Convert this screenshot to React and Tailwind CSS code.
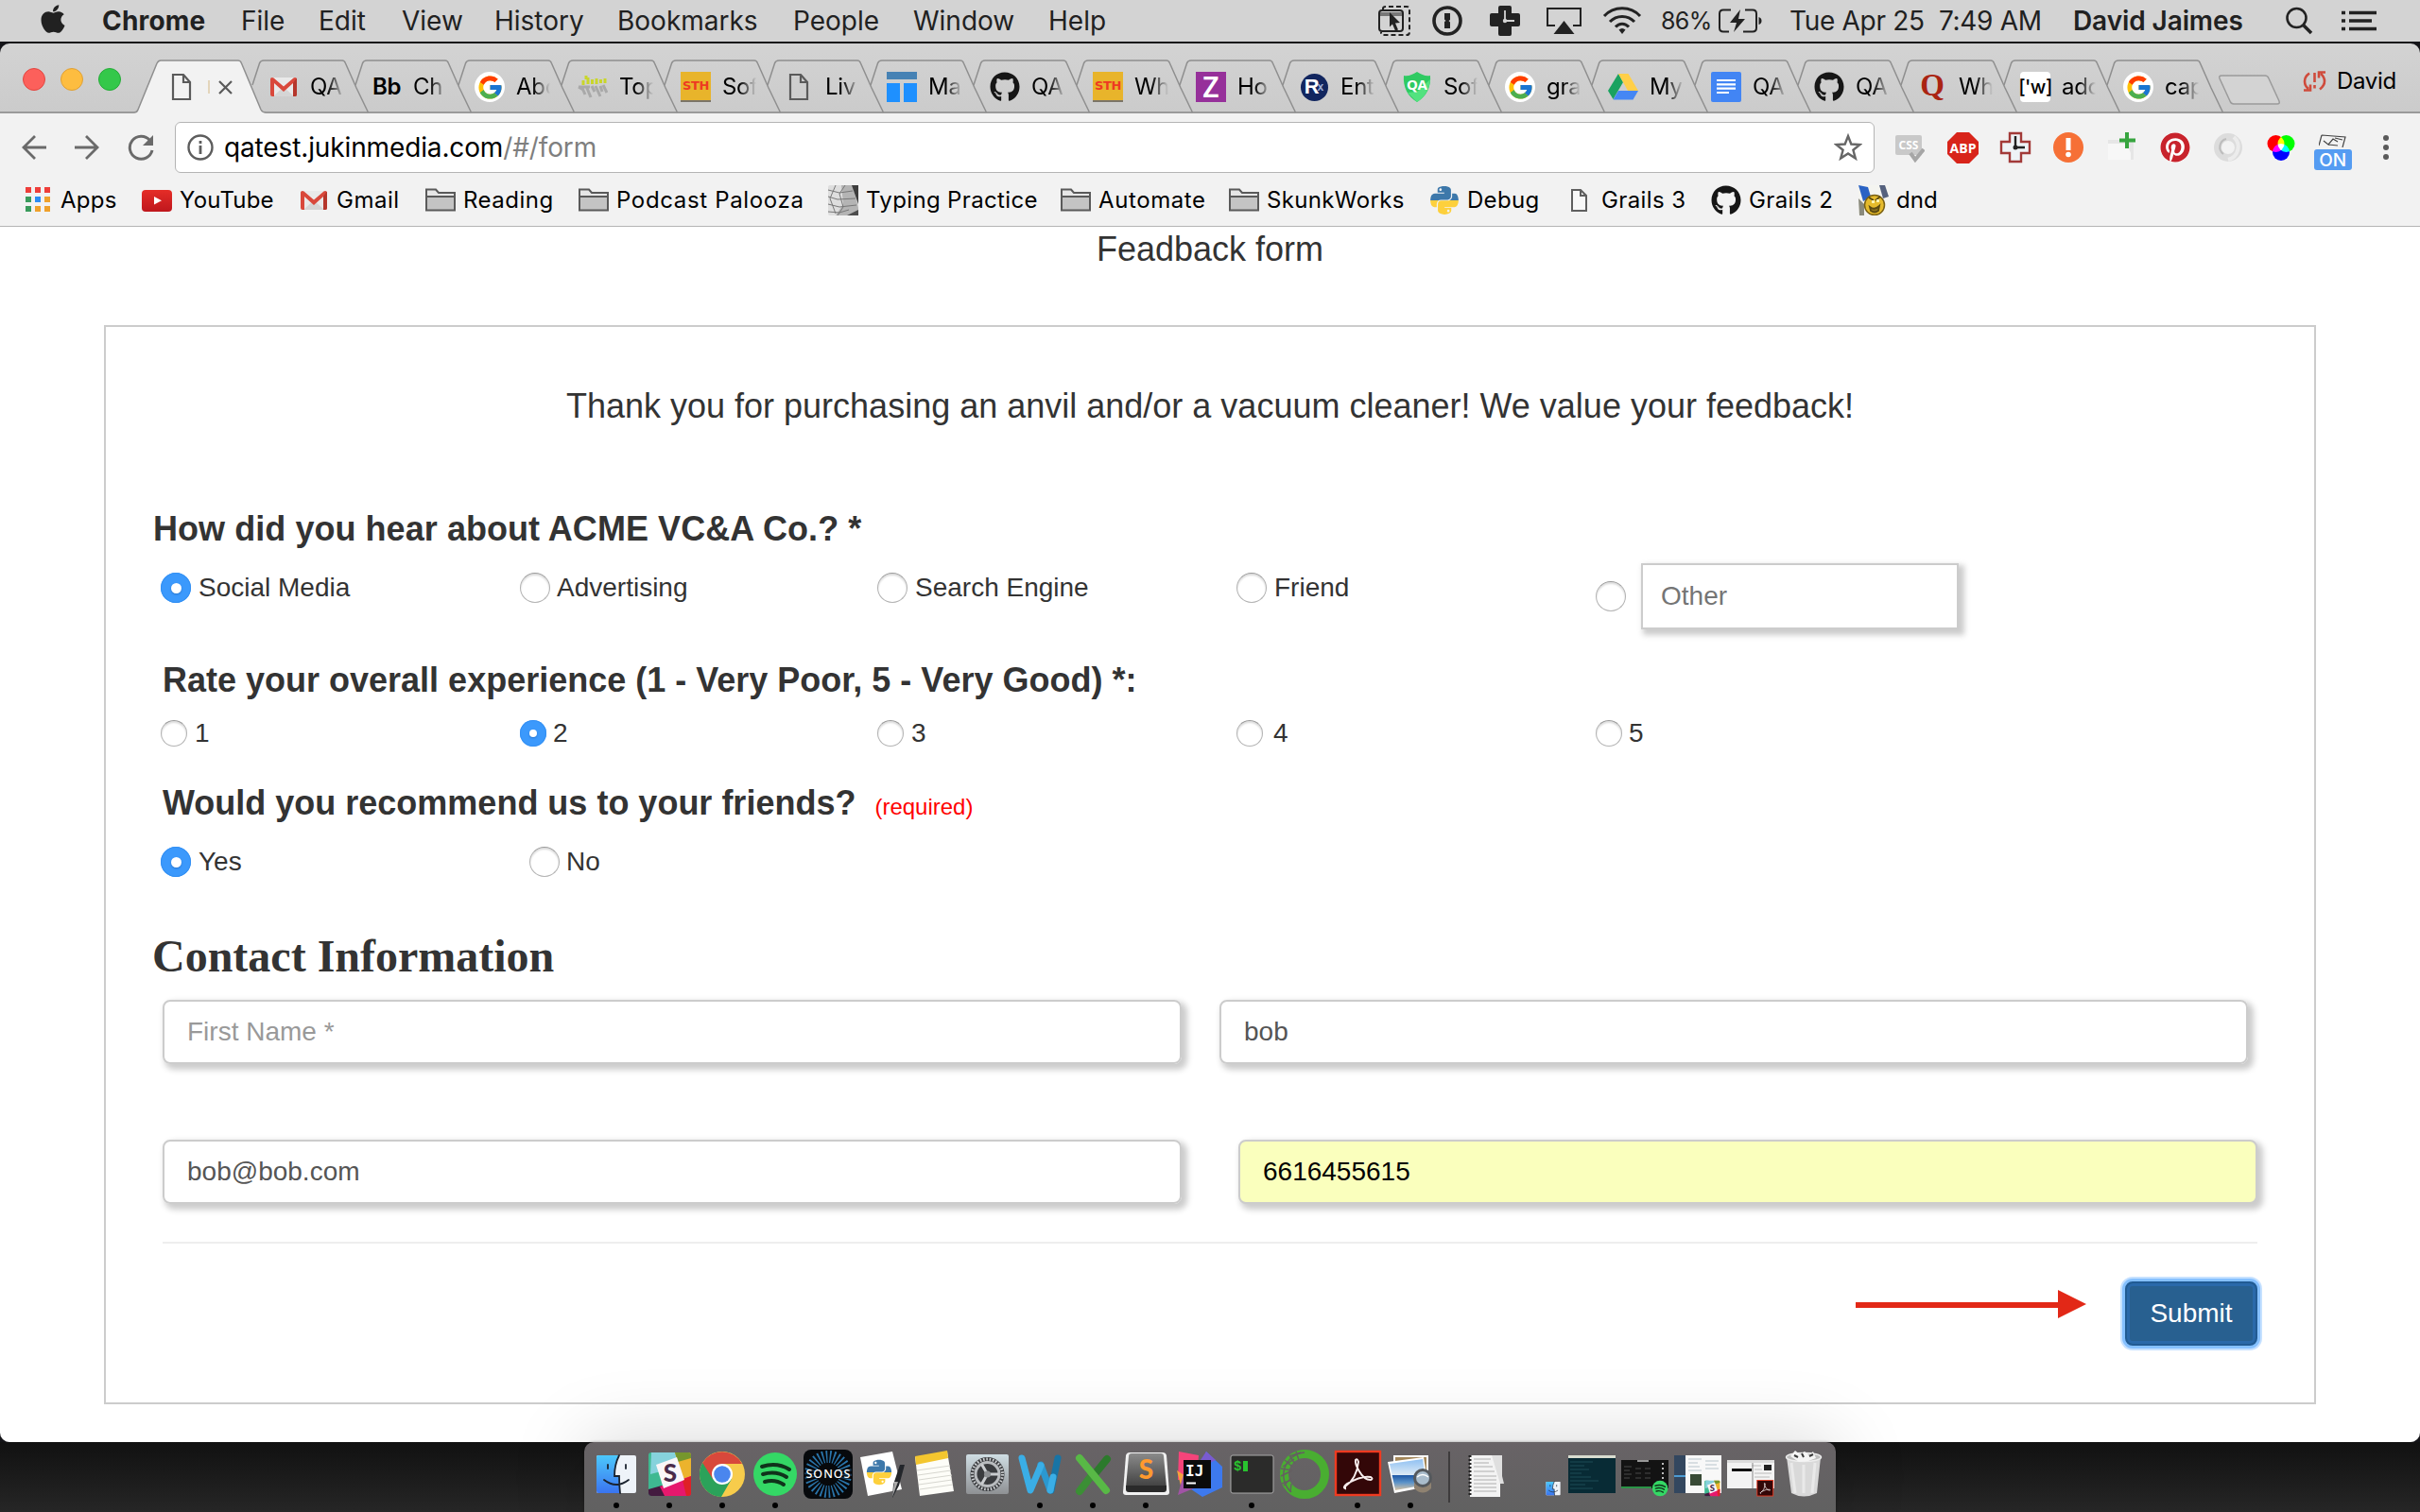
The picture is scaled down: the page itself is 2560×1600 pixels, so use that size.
import React from "react";
import { FaApple, FaGithub, FaPinterest, FaPython } from "react-icons/fa";
import { FcGoogle } from "react-icons/fc";

/* ---------- shared glyphs ---------- */

const Defs = () => (
  <svg width="0" height="0" className="absolute">
    <defs>
      <linearGradient id="py" x1="0" y1="0" x2="0" y2="1">
        <stop offset="0.5" stopColor="#3d78aa" />
        <stop offset="0.5" stopColor="#fdd03c" />
      </linearGradient>
      <linearGradient id="finder" x1="0" y1="0" x2="0" y2="1">
        <stop offset="0" stopColor="#4cc8fb" />
        <stop offset="1" stopColor="#3a74f0" />
      </linearGradient>
      <linearGradient id="key" x1="0" y1="0" x2="0" y2="1">
        <stop offset="0" stopColor="#8a8a8a" />
        <stop offset="1" stopColor="#3a3a3a" />
      </linearGradient>
      <linearGradient id="metal" x1="0" y1="0" x2="0" y2="1">
        <stop offset="0" stopColor="#cfdde3" />
        <stop offset="1" stopColor="#8f9194" />
      </linearGradient>
      <linearGradient id="tube" x1="0" y1="0" x2="0" y2="1">
        <stop offset="0" stopColor="#e52d27" />
        <stop offset="1" stopColor="#bf171d" />
      </linearGradient>
      <linearGradient id="sea" x1="0" y1="0" x2="0" y2="1">
        <stop offset="0" stopColor="#8fc0f2" />
        <stop offset="0.5" stopColor="#dbe9f5" />
        <stop offset="0.52" stopColor="#1d57a5" />
        <stop offset="0.75" stopColor="#5b93c9" />
        <stop offset="1" stopColor="#d8c4a4" />
      </linearGradient>
    </defs>
  </svg>
);

const GmailIcon = () => (
  <svg width="32" height="32" viewBox="0 0 32 32">
    <path d="M3 6h26v20H3z" fill="#e9e9e9" />
    <path d="M5 26l11-10 11 10z" fill="#d5d5d5" />
    <path d="M2 8v16a2 2 0 0 0 2 2h2V12l10 9 10-9v14h2a2 2 0 0 0 2-2V8c0-2-2-2.600-3.500-1.500L16 15.500 5.500 6.500C4 5.400 2 6 2 8z" fill="#d9483b" />
    <path d="M26 12v14h2a2 2 0 0 0 2-2V8c0-.6-.2-1-.5-1.300z" fill="#b5362b" />
  </svg>
);

const PageIcon = () => (
  <svg width="32" height="32" viewBox="0 0 32 32" fill="none" stroke="#5a5a5a" strokeWidth="2.200">
    <path d="M7 3h11l7 8v18H7z" />
    <path d="M18 3v8h7" />
  </svg>
);

const SmallPageIcon = () => (
  <svg width="32" height="32" viewBox="0 0 32 32" fill="none" stroke="#5f5f5f" strokeWidth="2">
    <path d="M9 5h9l6 6v16H9z" fill="#f8f8f8" />
    <path d="M18 5v6h6" />
  </svg>
);

const FolderIcon = () => (
  <svg width="32" height="32" viewBox="0 0 32 32" stroke="#5a5a5a" strokeWidth="2">
    <path d="M1 26V4.500h10l3 3.500h17v18z" fill="#e6e6e6" />
    <path d="M1 12h30v14.500H1z" fill="#c4c4c4" />
  </svg>
);

const GoogleIcon = () => (
  <span className="flex size-8 items-center justify-center rounded-full bg-white">
    <FcGoogle size={29} />
  </span>
);

const GithubIcon = () => <FaGithub size={32} color="#161616" />;

const PythonIcon = () => <FaPython size={34} fill="url(#py)" />;

const SthIcon = () => (
  <span className="flex size-8 items-center justify-center border-b-2 border-[#7b7468] bg-[#e8b42b] font-['DejaVu_Sans'] text-[13px] font-bold tracking-tight text-[#ee3a22]">
    STH
  </span>
);

const TopIcon = () => (
  <svg width="32" height="32" viewBox="0 0 32 32" strokeWidth="3">
    <path d="M6 9v5M11 6v7M15.500 8v5M20 7v6M24.500 8v4M29 7v5M9 4v4" stroke="#c9d62b" />
    <path d="M1 16l5 3M4 15l4 9M9 15l5 12M15 15l3 6M19 15l5 11M24 15l2 6M27 14l4 8M1 16h12" stroke="#a9a9a9" />
  </svg>
);

const TileIcon = () => (
  <svg width="32" height="32" viewBox="0 0 32 32">
    <path d="M0 0h32v8H0z" fill="#4682b4" />
    <path d="M0 12h14v20H0zM18 12h14v20H18z" fill="#1e90ff" />
  </svg>
);

const ZIcon = () => (
  <span className="flex size-8 items-center justify-center bg-[#96309a] font-['Noto_Sans'] text-[30px] leading-none font-semibold text-white">
    Z
  </span>
);

const RxIcon = () => (
  <span className="flex size-[29px] items-center justify-center rounded-full bg-[#12265f] font-['Liberation_Sans'] text-[22px] leading-none font-bold text-white">
    R<span className="-ml-[2px] text-[12px] text-[#9fb0d8]">x</span>
  </span>
);

const QaIcon = () => (
  <svg width="32" height="32" viewBox="0 0 32 32">
    <path d="M2 4c5 1 9-1 14-4 5 3 9 5 14 4 1 12-4 22-14 28C6 26 1 16 2 4z" fill="#2fca62" />
    <path d="M30 8C29 19 24 27 16 32L6 22l10-1z" fill="#52e27f" />
    <text x="16" y="19" textAnchor="middle" fontSize="15" fontWeight="700" fill="#fff" fontFamily="Noto Sans">QA</text>
  </svg>
);

const DriveIcon = () => (
  <svg width="32" height="32" viewBox="0 0 32 32">
    <path d="M11 2L0 20l5.500 9L16 11z" fill="#1aa260" />
    <path d="M11 2h10.500L32 20H21z" fill="#ffcf48" />
    <path d="M11 20h21l-5.500 9.500H5.500z" fill="#4587f4" />
  </svg>
);

const DocsIcon = () => (
  <svg width="32" height="32" viewBox="0 0 32 32">
    <rect width="32" height="32" rx="2" fill="#4285f4" />
    <path d="M6 9h20M6 13.300h20M6 17.600h20M6 22h13" stroke="#fff" strokeWidth="2.200" />
  </svg>
);

const QuoraIcon = () => (
  <span className="-mt-1 font-['Liberation_Serif'] text-[33px] leading-none font-bold text-[#aa2412]">Q</span>
);

const WIcon = () => (
  <span className="flex size-8 items-center justify-center rounded-[4px] bg-white font-['Inter'] text-[20px] leading-none font-medium tracking-tight text-black">
    ['w]
  </span>
);

const BbIcon = () => (
  <span className="font-['Inter'] text-[24px] leading-none font-semibold tracking-[-0.5px] text-black">Bb</span>
);

/* ---------- menu bar ---------- */

const menus = [
  ["File", "w-[82px]"],
  ["Edit", "w-[88px]"],
  ["View", "w-[98px]"],
  ["History", "w-[130px]"],
  ["Bookmarks", "w-[186px]"],
  ["People", "w-[127px]"],
  ["Window", "w-[143px]"],
  ["Help", "w-[348px]"],
];

function MenuBar() {
  return (
    <div className="flex h-11 shrink-0 items-center bg-[#d3d3d3] pl-[41px] font-['Inter'] text-[28px] leading-[44px] whitespace-pre text-[#212121]">
      <div className="w-[67px] shrink-0 pb-1">
        <FaApple size={34} className="-ml-[2px]" />
      </div>
      <div className="w-[147px] shrink-0 font-bold tracking-[0.2px]">Chrome</div>
      {menus.map(([m, w]) => (
        <div key={m} className={w + " shrink-0"}>{m}</div>
      ))}
      <div className="ml-px w-[57px] shrink-0">
        <svg width="34" height="32" viewBox="0 0 34 32" fill="none" stroke="#222" strokeWidth="2">
          <rect x="1" y="5" width="25" height="22" rx="3" />
          <path d="M2 9h23" strokeWidth="4" stroke="#777" />
          <path d="M5 4V3q0-2 3-2h22q3 0 3 3v24q0 3-3 3H5q-2 0-2-3" strokeDasharray="5 3" />
          <path d="M12 7l11 11-5 .5 3 7-3 1-3-7-3 3z" fill="#222" stroke="none" />
        </svg>
      </div>
      <div className="w-[61px] shrink-0">
        <svg width="32" height="32" viewBox="0 0 32 32">
          <circle cx="16" cy="16" r="14" fill="none" stroke="#222" strokeWidth="3.600" />
          <path d="M13 8h6v7l-1.500 1 1.500 1.500V24h-6v-7l1.500-1L13 14.500z" fill="#222" />
        </svg>
      </div>
      <div className="w-[60px] shrink-0">
        <svg width="32" height="32" viewBox="0 0 32 32">
          <path d="M11 0h10q2 0 2 2v6h7q2 0 2 2v10q0 2-2 2h-7v8q0 2-2 2H11q-2 0-2-2v-8H2q-2 0-2-2V10q0-2 2-2h7V2q0-2 2-2z" fill="#222" />
          <path d="M16 5v11h10" fill="none" stroke="#d3d3d3" strokeWidth="1.800" />
          <circle cx="16" cy="16" r="2.200" fill="#d3d3d3" />
        </svg>
      </div>
      <div className="w-[59px] shrink-0">
        <svg width="38" height="30" viewBox="0 0 38 30">
          <path d="M9 20H1V2h35v18h-8" fill="none" stroke="#222" strokeWidth="2" />
          <path d="M18.500 15l11 14h-22z" fill="#222" />
        </svg>
      </div>
      <div className="w-[62px] shrink-0">
        <svg width="42" height="30" viewBox="0 0 42 30" fill="none" stroke="#222" strokeWidth="3">
          <path d="M2 10C12-1 30-1 40 10M8 16c7-7.500 19-7.500 26 0M14 21.500c4-4.500 10-4.500 14 0" />
          <path d="M21 29l-3.500-4.500q3.500-3 7 0z" fill="#222" stroke="none" />
        </svg>
      </div>
      <div className="w-[61px] shrink-0 text-[25px] tracking-[-0.6px]">86%</div>
      <div className="w-[76px] shrink-0">
        <svg width="46" height="26" viewBox="0 0 46 26">
          <path d="M13 1.500H5q-4 0-4 4v15q0 4 4 4h6M28 1.500h8q4 0 4 4v15q0 4-4 4h-10" fill="none" stroke="#222" strokeWidth="2" />
          <path d="M42.500 9q3 1 3 4t-3 4z" fill="#222" />
          <path d="M23 1L12 15h7l-3 10 12-14h-7z" fill="#222" />
        </svg>
      </div>
      <div className="-ml-px w-[300px] shrink-0 tracking-[-0.3px]">Tue Apr 25  7:49 AM</div>
      <div className="w-[225px] shrink-0 font-semibold tracking-[-0.1px]">David Jaimes</div>
      <div className="w-[59px] shrink-0">
        <svg width="29" height="30" viewBox="0 0 29 30" fill="none" stroke="#222" strokeWidth="2.600">
          <circle cx="11.500" cy="12" r="10" />
          <path d="M18.500 19.500L27 28" strokeWidth="3.500" />
        </svg>
      </div>
      <svg width="38" height="22" viewBox="0 0 38 22" stroke="#222" strokeWidth="3.600">
        <path d="M0 2.500h4M8 2.500h29M0 11h4M8 11h24M0 19.500h4M8 19.500h29" />
      </svg>
    </div>
  );
}

/* ---------- browser tabs ---------- */

const tabs = [
  ["QA", GmailIcon],
  ["Ch", BbIcon],
  ["Abo", GoogleIcon],
  ["Top", TopIcon],
  ["Sof", SthIcon],
  ["Liv", PageIcon],
  ["Ma", TileIcon],
  ["QA", GithubIcon],
  ["Wh", SthIcon],
  ["Ho", ZIcon],
  ["Ent", RxIcon],
  ["Sof", QaIcon],
  ["gra", GoogleIcon],
  ["My", DriveIcon],
  ["QA", DocsIcon],
  ["QA", GithubIcon],
  ["Wh", QuoraIcon],
  ["ado", WIcon],
  ["cap", GoogleIcon],
];

const TabShape = () => (
  <svg className="absolute top-0 -left-[14px]" width="128" height="57" viewBox="0 0 128 57">
    <path d="M2 27L9.500 4Q10.500 1 14 1H97Q99.500 1 100.500 4L112 30L124.500 56" fill="none" stroke="#8f8f8f" strokeWidth="1.500" />
  </svg>
);

function TabStrip() {
  return (
    <div className="flex h-[74px] shrink-0 bg-linear-to-b from-[#d3d3d3] to-[#cbcbcb] pt-[17px] shadow-[inset_0_-2px_0_#9a9a9a]">
      <div className="flex w-[170px] shrink-0 gap-4 pt-[9px] pl-6">
        <span className="size-6 rounded-full border border-[#e2453f] bg-[#fc605b]" />
        <span className="size-6 rounded-full border border-[#dfa035] bg-[#fdbd40]" />
        <span className="size-6 rounded-full border border-[#24ac37] bg-[#34c84a]" />
      </div>
      <div className="relative z-10 flex w-[109px] shrink-0">
        <svg className="absolute top-0 -left-[28px]" width="142" height="57" viewBox="0 0 142 57">
          <path d="M0 56.500Q3 56 4 53L24 4Q25.500 1 28 1H110Q112.500 1 113.500 4L134 53Q135.500 56 139 56.500V57H0z" fill="#f2f2f2" />
          <path d="M0 56Q3 56 4 53L24 4Q25.500 1 28 1H110Q112.500 1 113.500 4L134 53Q135.500 56 139 56" fill="none" stroke="#8f8f8f" strokeWidth="1.500" />
        </svg>
        <div className="relative flex h-[46px] items-center pt-3 pl-[6px]">
          <PageIcon />
          <span className="ml-[12px] h-3.5 w-[2px] bg-[#e3d5bb]" />
          <svg className="ml-[9px]" width="15" height="15" viewBox="0 0 15 15" stroke="#5a5a5a" strokeWidth="2.200">
            <path d="M1 1l13 13M14 1L1 14" />
          </svg>
        </div>
      </div>
      {tabs.map(([title, Icon], i) => (
        <div key={i} className="relative flex w-[109px] shrink-0">
          <TabShape />
          <div className="relative flex h-[46px] items-center pt-3 pl-[5px]">
            <span className="flex size-8 shrink-0 items-center justify-center">
              <Icon />
            </span>
            <span className="ml-3 w-[36px] overflow-hidden mask-r-from-50% mask-r-to-100% font-['Inter'] text-[24px] leading-8 tracking-[-0.3px] whitespace-nowrap text-black">
              {title}
            </span>
          </div>
        </div>
      ))}
      <svg className="mt-4 -ml-[4px] shrink-0" width="68" height="33" viewBox="0 0 68 33">
        <path d="M4 1H50Q53 1 54 4L65 28Q66 31 63 31H17Q14 31 13 28L2 4Q1 1 4 1z" fill="#d3d3d3" stroke="#9b9b9b" strokeWidth="1.500" />
      </svg>
      <div className="mt-[5px] ml-[22px] flex h-9 shrink-0 items-center gap-[11px] font-['Inter'] text-[24px] tracking-[-0.3px] text-black">
        <svg width="25" height="24" viewBox="0 0 25 24" fill="none" stroke="#cf4b3c" strokeWidth="2.600">
          <path d="M7 3.500Q2 7 2 12t4 8M1 21.500h7v-6M18 20.500q5-4 5-8.500t-4-8M24 2.500h-7v6" />
          <path d="M12.500 3v10M12.500 16v3.500" />
        </svg>
        David
      </div>
    </div>
  );
}

/* ---------- toolbar ---------- */

const CssIcon = () => (
  <svg width="32" height="32" viewBox="0 0 32 32">
    <rect x="1" y="3" width="28" height="21" rx="2" fill="#c9c9c9" />
    <text x="15" y="18" textAnchor="middle" fontSize="12" fontWeight="700" fill="#fff" fontFamily="Noto Sans">CSS</text>
    <path d="M17 22l5 7L31 18" fill="none" stroke="#a6a6a6" strokeWidth="4" />
  </svg>
);
const AbpIcon = () => (
  <svg width="33" height="33" viewBox="0 0 33 33">
    <path d="M10 0h13l10 10v13L23 33H10L0 23V10z" fill="#d8241a" />
    <text x="16.500" y="21.500" textAnchor="middle" fontSize="14" fontWeight="700" fill="#fff" fontFamily="Open Sans">ABP</text>
  </svg>
);
const CrossClockIcon = () => (
  <svg width="34" height="34" viewBox="0 0 34 34">
    <path d="M11 2h12v9h9v12h-9v9H11v-9H2V11h9z" fill="#eef3f6" stroke="#a23a38" strokeWidth="2.400" />
    <path d="M17 5v12h10" fill="none" stroke="#222" strokeWidth="2.400" />
    <circle cx="17" cy="17" r="2.500" fill="#222" />
  </svg>
);
const AlertIcon = () => (
  <svg width="32" height="32" viewBox="0 0 32 32">
    <circle cx="16" cy="16" r="16" fill="#f67036" />
    <path d="M13.500 6h5v13h-5z" fill="#fff" />
    <circle cx="16" cy="23.500" r="2.800" fill="#fff" />
  </svg>
);
const AddPageIcon = () => (
  <svg width="32" height="32" viewBox="0 0 32 32">
    <path d="M2 8h27v21H2z" fill="#e6e6e6" />
    <path d="M2 12h20l4 10v7H2z" fill="#f7f7f7" />
    <path d="M22 0v17M14 8.500h17" stroke="#37a53f" strokeWidth="4" />
  </svg>
);
const PinIcon = () => (
  <span className="rounded-full bg-white">
    <FaPinterest size={32} color="#c8232c" />
  </span>
);
const RingIcon = () => (
  <svg width="32" height="32" viewBox="0 0 32 32" fill="none">
    <circle cx="16" cy="16" r="11" stroke="#dcdcdc" strokeWidth="8" />
    <path d="M14 7a9 9 0 0 0-3 16" stroke="#bcbcbc" strokeWidth="2" />
    <path d="M22 5a14 14 0 0 1-6 24" stroke="#ececec" strokeWidth="4" />
  </svg>
);
const RgbIcon = () => (
  <svg width="32" height="32" viewBox="0 0 32 32" className="isolate">
    <g className="[&>circle]:mix-blend-screen">
      <circle cx="10.500" cy="12" r="9" fill="#f00" />
      <circle cx="21.500" cy="12" r="9" fill="#0f0" />
      <circle cx="16" cy="21" r="9" fill="#00f" />
    </g>
  </svg>
);
const OnIcon = () => (
  <span className="flex h-[41px] w-10 flex-col items-center">
    <svg width="30" height="16" viewBox="0 0 30 16" fill="none" stroke="#444" strokeWidth="1.200">
      <path d="M3 3l25 2-3 11M3 3L0 14M5 9l5 4 5-6 5 3M17 6l8 2M10 13l10 1" />
    </svg>
    <span className="mt-0.5 flex h-[22px] w-10 items-center justify-center rounded-[3px] bg-[#559cf2] font-['Inter'] text-[19px] leading-none font-medium text-white">
      ON
    </span>
  </span>
);

const extensions = [CssIcon, AbpIcon, CrossClockIcon, AlertIcon, AddPageIcon, PinIcon, RingIcon, RgbIcon];

function Toolbar() {
  return (
    <div className="flex h-[70px] shrink-0 items-center bg-[#f2f2f2] pt-[2px]">
      <div className="flex w-[185px] shrink-0 items-center gap-[30px] pl-[23px]">
        <svg width="26" height="26" viewBox="0 0 26 26" fill="none" stroke="#6a6a6a" strokeWidth="2.800">
          <path d="M26 13H3M14 1L2 13l12 12" />
        </svg>
        <svg width="26" height="26" viewBox="0 0 26 26" fill="none" stroke="#6a6a6a" strokeWidth="2.800">
          <path d="M0 13h23M12 1l12 12-12 12" />
        </svg>
        <svg width="28" height="28" viewBox="0 0 28 28" fill="none" stroke="#6a6a6a" strokeWidth="3">
          <path d="M23.500 6.500A12 12 0 1 0 26 17" />
          <path d="M27 1v11H16z" fill="#6a6a6a" stroke="none" />
        </svg>
      </div>
      <div className="flex h-[54px] w-[1798px] shrink-0 items-center rounded-[6px] border-[1.5px] border-[#b4b4b4] bg-white pr-3 pl-[12px] font-['Inter'] text-[28px]">
        <svg width="28" height="28" viewBox="0 0 28 28" stroke="#5d5d5d" fill="none">
          <circle cx="14" cy="14" r="12.500" strokeWidth="2.400" />
          <path d="M14 12v9M14 7v3" strokeWidth="2.800" />
        </svg>
        <span className="ml-[11px] tracking-[-0.13px] text-black">
          qatest.jukinmedia.com<span className="text-[#7f7f7f]">/#/form</span>
        </span>
        <svg className="ml-auto" width="30" height="30" viewBox="0 0 30 30" fill="none" stroke="#666" strokeWidth="2.400">
          <path d="M15 3l3.300 8.500 9.200.5-7.100 5.700 2.400 8.900L15 21.500l-7.800 5.100 2.400-8.900L2.500 12l9.200-.5z" />
        </svg>
      </div>
      <div className="ml-[9px] flex shrink-0 items-center">
        {extensions.map((Ext, i) => (
          <span key={i} className="flex w-[56.100px] justify-center">
            <Ext />
          </span>
        ))}
        <span className="flex w-[54px] justify-center pt-[9px]">
          <OnIcon />
        </span>
      </div>
      <span className="ml-[26px] flex flex-col gap-1">
        <span className="size-[6px] rounded-full bg-[#5a5a5a]" />
        <span className="size-[6px] rounded-full bg-[#5a5a5a]" />
        <span className="size-[6px] rounded-full bg-[#5a5a5a]" />
      </span>
    </div>
  );
}

/* ---------- bookmarks bar ---------- */

const AppsIcon = () => (
  <svg width="32" height="32" viewBox="0 0 32 32">
    <path d="M3 2h6v6H3zM13 2h6v6h-6zM23 2h6v6h-6z" fill="#ee3e3a" />
    <path d="M3 12h6v6H3zM3 22h6v6H3z" fill="#3a9b5c" />
    <path d="M13 12h6v6h-6z" fill="#2b8cf3" />
    <path d="M23 12h6v6h-6zM13 22h6v6h-6zM23 22h6v6h-6z" fill="#efa12b" />
  </svg>
);
const YouTubeIcon = () => (
  <svg width="32" height="32" viewBox="0 0 32 32">
    <rect y="5" width="32" height="23" rx="4" fill="url(#tube)" />
    <path d="M13 12l8 4.300-8 4.300z" fill="#fff" />
  </svg>
);
const KeysIcon = () => (
  <svg width="32" height="32" viewBox="0 0 32 32">
    <rect width="32" height="32" rx="2" fill="#dedede" />
    <path d="M14 0h12l6 24v8H8l8-12z" fill="#b4b4b4" />
    <path d="M25 0h7v20z" fill="#3d3d3d" />
    <path d="M0 5l12 3 14-2M0 12l10 3 19-1M0 20l12 3 18-2M0 28l12 1 10-3M8 0L2 14l6 16M18 0l-6 9 4 14-6 9" stroke="#777" fill="none" />
    <path d="M20 32l12-6v6z" fill="#4d4d4d" />
  </svg>
);
const DndIcon = () => (
  <svg width="32" height="32" viewBox="0 0 32 32">
    <rect width="32" height="32" fill="#f4f4f0" />
    <path d="M0 0l10 2 3 10-8 5z" fill="#2a62c4" />
    <path d="M22 0h6l4 12-6 2z" fill="#55617e" />
    <path d="M0 14l6 6 0 12H1z" fill="#8a8a7c" />
    <circle cx="17" cy="21" r="10.500" fill="#e6bb2c" stroke="#7a6114" strokeWidth="1.500" />
    <path d="M11 13l5 3M23 12l-5 4M12 23q5 4 10-1l-1 5q-4 3-8 0z" stroke="#5b4a12" strokeWidth="1.800" fill="#8d7320" />
    <path d="M14 16h3v3h-3zM19 15h3v3h-3z" fill="#fff3b0" />
  </svg>
);

const bookmarks = [
  ["Apps", AppsIcon, "w-[126px] tracking-[0.3px]"],
  ["YouTube", YouTubeIcon, "w-[166px] tracking-[0.2px]"],
  ["Gmail", GmailIcon, "w-[134px] tracking-[0.5px]"],
  ["Reading", FolderIcon, "w-[162px] tracking-[0.5px]"],
  ["Podcast Palooza", FolderIcon, "w-[264px] tracking-[0.65px]"],
  ["Typing Practice", KeysIcon, "w-[246px] tracking-[0.35px]"],
  ["Automate", FolderIcon, "w-[178px] tracking-[0.6px]"],
  ["SkunkWorks", FolderIcon, "w-[212px] tracking-[0.35px]"],
  ["Debug", PythonIcon, "w-[142px] tracking-[0.3px]"],
  ["Grails 3", SmallPageIcon, "w-[156px] tracking-[0.4px]"],
  ["Grails 2", GithubIcon, "w-[156px] tracking-[0.4px]"],
  ["dnd", DndIcon, "w-[120px]"],
];

function BookmarksBar() {
  return (
    <div className="flex h-[50px] shrink-0 items-center border-b border-[#b5b5b5] bg-[#f2f2f2] pb-[6px] pl-6 font-['Inter'] text-[24px] leading-8 whitespace-nowrap text-black">
      {bookmarks.map(([label, Icon, w]) => (
        <span key={label} className={w + " flex shrink-0 items-center gap-2"}>
          <span className="flex size-8 shrink-0 items-center justify-center">
            <Icon />
          </span>
          <span>{label}</span>
        </span>
      ))}
    </div>
  );
}

/* ---------- form ---------- */

function Radio({ checked, small }) {
  const size = small ? "size-7" : "size-8";
  if (checked) {
    return (
      <span className={size + " flex shrink-0 items-center justify-center rounded-full bg-[#3b99fc] shadow-[inset_0_0_0_1px_#3490f3]"}>
        <span className={(small ? "size-2" : "size-[11px]") + " rounded-full bg-white shadow-[0_1px_2px_rgba(0,50,120,0.35)]"} />
      </span>
    );
  }
  return (
    <span className={size + " shrink-0 rounded-full border-[1.5px] border-[#b3b3b3] border-t-[#999999] bg-white shadow-[inset_0_2px_2px_rgba(0,0,0,0.14)]"} />
  );
}

function Option({ label, checked, small, gap = "gap-2", className = "" }) {
  return (
    <label className={"flex shrink-0 items-center text-[28px] leading-8 " + gap + " " + className}>
      <Radio checked={checked} small={small} />
      {label}
    </label>
  );
}

function Field({ value, className }) {
  return (
    <div className={"flex h-[68px] shrink-0 items-center rounded-[8px] border-2 border-[#cccccc] px-6 text-[28px] leading-8 shadow-[4px_4px_6px_2px_#cccccc] " + className}>
      {value}
    </div>
  );
}

function FeedbackForm() {
  return (
    <div className="flex flex-1 flex-col bg-white pt-[4px] font-['Liberation_Sans',Arial,sans-serif] text-[#333333]">
      <div className="text-center text-[36px] leading-10">Feadback form</div>
      <div className="mx-[110px] mt-[60px] flex h-[1142px] flex-col border-2 border-[#cccccc] pt-[64px] pr-[60px] pl-[48px]">
        <p className="-mr-3 text-center text-[36px] leading-10">
          Thank you for purchasing an anvil and/or a vacuum cleaner! We value your feedback!
        </p>
        <h4 className="mt-[90px] ml-[2px] text-[36px] leading-10 font-bold tracking-[0.05px]">How did you hear about ACME VC&amp;A Co.? *</h4>
        <div className="mt-[16px] flex h-[70px] pl-[10px]">
          <Option label="Social Media" checked className="mt-[10px] h-8 w-[380px]" />
          <Option label="Advertising" gap="gap-[7px]" className="mt-[10px] h-8 w-[378px]" />
          <Option label="Search Engine" className="mt-[10px] h-8 w-[380px]" />
          <Option label="Friend" className="mt-[10px] h-8 w-[380px]" />
          <div className="flex items-center">
            <Radio />
            <div className="ml-4 flex h-[70px] w-[336px] items-center border-2 border-[#cccccc] pl-[19px] text-[28px] leading-8 text-[#757575] shadow-[4px_4px_6px_2px_#cccccc]">
              Other
            </div>
          </div>
        </div>
        <h4 className="mt-[34px] ml-[12px] text-[36px] leading-10 font-bold">Rate your overall experience (1 - Very Poor, 5 - Very Good) *:</h4>
        <div className="mt-[20px] flex pl-[10px]">
          <Option small label="1" gap="gap-[8px]" className="w-[380px]" />
          <Option small label="2" checked gap="gap-[7px]" className="w-[378px]" />
          <Option small label="3" gap="gap-[8px]" className="w-[380px]" />
          <Option small label="4" gap="gap-[11px]" className="w-[380px]" />
          <Option small label="5" gap="gap-[7px]" />
        </div>
        <h4 className="mt-[38px] ml-[12px] flex h-10 items-baseline text-[36px] leading-10 font-bold">
          Would you recommend us to your friends?
          <span className="ml-5 text-[24px] font-normal text-[#ff0000]">(required)</span>
        </h4>
        <div className="mt-[26px] flex pl-[10px]">
          <Option label="Yes" checked className="w-[390px]" />
          <Option label="No" gap="gap-[7px]" />
        </div>
        <h3 className="mt-[56px] ml-[1px] font-['Liberation_Serif'] text-[48px] leading-[56px] font-bold">Contact Information</h3>
        <div className="mt-[18px] flex gap-10 pl-[12px]">
          <Field value="First Name *" className="w-[1078px] text-[#999999]" />
          <Field value="bob" className="w-[1088px] text-[#555555]" />
        </div>
        <div className="mt-20 flex gap-[60px] pl-[12px]">
          <Field value="bob@bob.com" className="w-[1078px] text-[#555555]" />
          <Field value="6616455615" className="w-[1078px] bg-[#faffbd] text-black" />
        </div>
        <div className="mt-10 ml-[12px] h-[2px] shrink-0 bg-[#eeeeee]" />
        <div className="mt-10 flex items-start justify-end gap-[41px]">
          <svg className="mt-[9px]" width="244" height="30" viewBox="0 0 244 30" fill="#e22817">
            <path d="M0 13h214v6H0zM214 0l30 15-30 15z" />
          </svg>
          <button className="h-[68px] w-[140px] rounded-[8px] border-2 border-[#215b93] bg-[#286090] text-[28px] leading-8 text-white shadow-[inset_0_0_0_3px_#2a69aa,0_0_0_3px_#85c0ff,0_0_0_5px_#c6e1ff]">
            Submit
          </button>
        </div>
      </div>
    </div>
  );
}

/* ---------- dock ---------- */

const Svg = ({ children }) => (
  <svg width="56" height="56" viewBox="0 0 56 56" className="overflow-visible">
    {children}
  </svg>
);

const FinderArt = () => (
  <>
    <rect x="7" y="8" width="42" height="40" rx="2" fill="#eef3f9" />
    <path d="M9 8h22q-5 10-5 22h5q0 10 1 18H9q-2 0-2-2V10q0-2 2-2z" fill="url(#finder)" />
    <path d="M31 8q-5 10-5 22h5q0 10 1 18M19 18v4M38 18v4M15 34q13 10 26 0" fill="none" stroke="#1b2430" strokeWidth="1.800" strokeLinecap="round" />
  </>
);
const SlackArt = () => (
  <>
    <path d="M6 8q0-3 3-3h9l10 46H9q-3 0-3-3z" fill="#3eb991" />
    <path d="M9 5h26l3 15-30 8z" fill="#86d2dc" />
    <path d="M34 5h14q3 0 3 3v28l-8 3z" fill="#ecb32d" />
    <path d="M34 5h14q3 0 3 3v3l-14 4z" fill="#76972c" />
    <path d="M6 44l14-4 4 11H9q-3 0-3-3z" fill="#431a3f" />
    <path d="M18 41l33-11v18q0 3-3 3H23z" fill="#e6186d" />
    <path d="M42 34l9-4v18q0 3-3 3h-2z" fill="#df2127" />
    <path d="M14 18l22-8 8 24-22 9z" fill="#faf6f8" />
    <text x="29" y="36" textAnchor="middle" fontFamily="Lato" fontWeight="900" fontSize="26" fill="#4a2a4a">S</text>
  </>
);
const ChromeArt = () => (
  <>
    <circle cx="28" cy="28" r="24" fill="#f7cc4b" />
    <path d="M28 28L7.200 16A24 24 0 0 0 27 52L38 33z" fill="#2ba25a" />
    <path d="M28 17h21A24 24 0 0 0 7.200 16L18 33z" fill="#d8483b" />
    <circle cx="28" cy="28" r="11" fill="#fff" />
    <circle cx="28" cy="28" r="8.800" fill="#4a86ee" />
  </>
);
const SpotifyArt = () => (
  <>
    <circle cx="28" cy="28" r="23" fill="#34d865" />
    <path d="M14 20q16-5 29 3M15 28q14-4 25 3M17 36q11-3 20 3" stroke="#10331b" strokeWidth="4" strokeLinecap="round" fill="none" />
  </>
);
const SonosArt = () => (
  <>
    <rect x="2" y="2" width="52" height="52" rx="8" fill="#07090c" />
    <circle cx="28" cy="28" r="18.500" fill="none" stroke="#2a75ab" strokeWidth="13" strokeDasharray="1.500 2.340" />
    <circle cx="28" cy="28" r="12" fill="#07090c" />
    <path d="M3 23h50v10H3z" fill="#07090c" opacity=".55" />
    <text x="28" y="32.300" textAnchor="middle" fontFamily="Noto Sans" fontSize="12.500" fontWeight="500" textLength="47" fill="#fff">SONOS</text>
  </>
);
const PyEditorArt = () => (
  <>
    <path d="M6 10l34-6 10 40-36 7z" fill="#fff" />
    <g transform="translate(11 11)">
      <FaPython size={30} fill="url(#py)" />
    </g>
    <path d="M53 18l-6 22-7 13 1-14 7-21z" fill="#23262b" />
    <path d="M46 36l-6 16 2-16z" fill="#aaa" />
  </>
);
const NotesArt = () => (
  <>
    <path d="M8 10l34-6 7 42-36 5z" fill="#fdfdf8" />
    <path d="M8 9l34-6 1 8L9 18z" fill="#f3c62f" />
    <path d="M10 24l35-5M11 29l35-5M12 34l35-5M12 39l35-5M13 44l35-5" stroke="#d7d7d0" />
  </>
);
const GearArt = () => (
  <>
    <rect x="6" y="7" width="45" height="42" rx="2" fill="url(#metal)" />
    <circle cx="28.500" cy="28" r="18" fill="#3a3c3f" />
    <circle cx="28.500" cy="28" r="16" fill="none" stroke="#c9cccf" strokeWidth="3" strokeDasharray="1.600 1.750" />
    <circle cx="28.500" cy="28" r="12.500" fill="none" stroke="#b9bcbf" strokeWidth="3" />
    <path d="M28.500 28h12M28.500 28l-6-10.500M28.500 28l-6 10.500" stroke="#c9cccf" strokeWidth="3" />
    <circle cx="28.500" cy="28" r="3.500" fill="#8d9093" />
  </>
);
const WordArt = () => (
  <g fill="none" strokeLinejoin="round" strokeLinecap="round" strokeWidth="7">
    <path d="M40 45l7-34" stroke="#1874a5" />
    <path d="M29 18l10 27" stroke="#2b98d0" />
    <path d="M9 11l9 34 11-26" stroke="#3aaee6" />
    <path d="M39 45l3-14" stroke="#3aaee6" />
  </g>
);
const ExcelArt = () => (
  <g fill="none" strokeLinecap="round" strokeWidth="8">
    <path d="M43 12L30 28" stroke="#2c7a2c" />
    <path d="M27 29L14 46" stroke="#3b8f35" />
    <path d="M14 11l28 34" stroke="#58b946" />
  </g>
);
const SublimeArt = () => (
  <>
    <path d="M7 8q1-3 4-3h35q3 0 4 3l3 39q0 3-3 3H7q-3 0-3-3z" fill="#f1f1f1" />
    <path d="M10 9q0-3 3-3h31q3 0 3 3l3 33q0 3-3 3H10q-3 0-3-3z" fill="url(#key)" />
    <path d="M7 40h43v4q0 3-3 3H10q-3 0-3-3z" fill="#2a2a2a" />
    <text x="28.500" y="33" textAnchor="middle" fontFamily="Lato" fontWeight="900" fontSize="28" fill="#ff9a2e">S</text>
  </>
);
const IntelliJArt = () => (
  <>
    <path d="M7 4l21 4-2 26-20 0z" fill="#f5447a" />
    <path d="M5 24l12 8-8 8z" fill="#f7a13d" />
    <path d="M36 4l17 16v22L32 52 20 44z" fill="#3d79ee" />
    <path d="M36 4l10 9-24 12z" fill="#7a5bd0" />
    <path d="M6 50l6-22 18 12z" fill="#a153a5" />
    <rect x="12" y="13" width="29" height="30" fill="#0b0b0b" />
    <text x="14" y="30" fontFamily="DejaVu Sans Mono" fontWeight="700" fontSize="16" fill="#fff">IJ</text>
    <path d="M15 37.500h10" stroke="#fff" strokeWidth="2" />
  </>
);
const TerminalArt = () => (
  <>
    <rect x="6" y="8" width="45" height="40" rx="2" fill="#2b2b2a" stroke="#aaaaaa" strokeWidth="1" />
    <text x="9" y="24" fontFamily="Liberation Mono" fontSize="14" fontWeight="700" fill="#29c22f">$</text>
    <rect x="19" y="14" width="5" height="11" fill="#29c22f" />
  </>
);
const AnacondaArt = () => (
  <g fill="none">
    <circle cx="28" cy="28" r="21.500" stroke="#49ae31" strokeWidth="9" />
    <path d="M12 46A24 24 0 0 1 26 4" stroke="#655f61" strokeWidth="1.500" transform="translate(2 1)" />
    <path d="M3 30l12-6M4 38l10-4M3 22l12 2M7 13l8 7M12 8l6 9M19 4l3 9M13 47l1-9M6 40l8-8M5 20l12-8M12 9l12-4" stroke="#655f61" strokeWidth="1.500" />
  </g>
);
const AcrobatArt = () => (
  <>
    <rect x="5" y="4" width="47" height="46" fill="#330708" stroke="#ee3a20" strokeWidth="2.400" />
    <path d="M15 41q12-8 14-26-1-4-3-2-1 4 4 12 5 9 12 9 3-1 0-3-9-2-25 7-5 4-2 5z" fill="none" stroke="#f6ecec" strokeWidth="2" />
  </>
);
const PreviewArt = () => (
  <>
    <path d="M10 8h37v30H10z" fill="#fff" />
    <path d="M12 10h33v26H12z" fill="#a3875a" />
    <path d="M4 15l38-5 5 31-36 7z" fill="#fff" />
    <path d="M6 17l35-5 4 27-33 6z" fill="url(#sea)" />
    <path d="M32 34v9q9 9 18 0v-9z" fill="#8f8271" />
    <circle cx="41" cy="32" r="8.500" fill="#a9bccb" stroke="#55595d" strokeWidth="3" />
    <path d="M35 31q6-5 12 0" stroke="#fff" strokeWidth="1.500" fill="none" />
  </>
);
const NotebookArt = () => (
  <>
    <path d="M11 8h25l7 16v28H11z" fill="#f3f3f3" />
    <path d="M34 8h11v22l2 8h-4z" fill="#dfdfdf" />
    <path d="M15 12h18M15 16h16M15 20h20M15 25h22M15 30h24M15 34h24M15 38h24M15 42h24M15 46h24" stroke="#aeaeae" />
    <path d="M11 8v44" stroke="#222" strokeWidth="3" strokeDasharray="2 2" />
  </>
);
const Mini = ({ x = 36, y = 36, children }) => <g transform={`translate(${x} ${y}) scale(.36)`}>{children}</g>;
const MiniFinder = () => <Mini x={33} y={33}><FinderArt /></Mini>;
const ShellWindow = () => (
  <>
    <path d="M3 8h50v40H3z" fill="#082b35" />
    <path d="M3 8h50v3H3z" fill="#d8dccf" />
    <path d="M5 15h24M5 19h15M5 23h20M5 27h12M5 31h22M5 35h30M5 39h16M5 43h24" stroke="#1c4c57" />
  </>
);
const SpotifyWindow = () => (
  <>
    <path d="M3 13h50v30H3z" fill="#131313" />
    <path d="M20 14h12" stroke="#999" strokeWidth="2" />
    <path d="M6 20h8M6 24h6M6 28h8M6 32h6M18 22h6M18 27h6M18 32h6M28 22h6M28 27h6M28 32h6" stroke="#4a4a4a" />
    <path d="M47 16v24" stroke="#bbb" strokeWidth="2" strokeDasharray="2 3" />
    <path d="M3 42h32" stroke="#2b9447" strokeWidth="2" />
    <Mini x={34} y={33}><SpotifyArt /></Mini>
  </>
);
const SlackWindow = () => (
  <>
    <path d="M3 8h50v40H3z" fill="#f8f8f8" />
    <path d="M3 8h12v40H3z" fill="#33475f" />
    <path d="M3 30h12" stroke="#4c9bd3" strokeWidth="2" />
    <path d="M18 12h14M18 16h10M18 20h12M18 24h14M36 14h14M36 18h12M36 22h14" stroke="#b8c4cc" />
    <path d="M20 28h12v12H20z" fill="#384a36" />
    <Mini x={33} y={33}><SlackArt /></Mini>
  </>
);
const PdfWindow = () => (
  <>
    <path d="M3 13h50v30H3z" fill="#f3f3f3" />
    <path d="M3 13h50v3H3z" fill="#dcdcdc" />
    <path d="M8 23.500h21" stroke="#111" strokeWidth="3" />
    <path d="M42 18h8v6h-8z" fill="#222" />
    <path d="M29 19h10M32 23h8M32 27h18M32 31h16" stroke="#bbb" />
    <path d="M30 16v27" stroke="#888" />
    <Mini x={33} y={33}><AcrobatArt /></Mini>
  </>
);
const TrashArt = () => (
  <>
    <path d="M10 10q18 6 36 0l-4 38q-14 7-27 0z" fill="#d9d9d9" />
    <path d="M15 16l4 32M28 18v30M40 16l-3 32" stroke="#f0f0f0" strokeWidth="3" opacity=".7" />
    <ellipse cx="28" cy="10" rx="18.500" ry="4.500" fill="#bdbdbd" stroke="#ededed" strokeWidth="1.500" />
    <path d="M14 9l5-6 5 4 5-3 5 4 4-4 3 7-8 3-10 1z" fill="#f5f5f5" />
    <path d="M18 8l4 2M26 6l2 4M34 9l4-2" stroke="#3a3a3a" strokeWidth="2" />
  </>
);

const dockApps = [
  [FinderArt, true],
  [SlackArt, true],
  [ChromeArt, true],
  [SpotifyArt, true],
  [SonosArt, false],
  [PyEditorArt, false],
  [NotesArt, false],
  [GearArt, false],
  [WordArt, true],
  [ExcelArt, true],
  [SublimeArt, true],
  [IntelliJArt, false],
  [TerminalArt, true],
  [AnacondaArt, false],
  [AcrobatArt, true],
  [PreviewArt, true],
];

const dockWindows = [NotebookArt, MiniFinder, ShellWindow, SpotifyWindow, SlackWindow, PdfWindow, TrashArt];

function Dock() {
  return (
    <div className="relative flex h-[74px] w-[1324px] rounded-t-[10px] bg-linear-to-b from-[#686366] to-[#616161] pt-[6px] pl-[6px] shadow-[0_0_80px_rgba(0,0,0,0.17),0_0_3px_rgba(0,0,0,0.35)]">
      {dockApps.map(([Art, running], i) => (
        <span key={i} className="flex w-14 shrink-0 flex-col items-center">
          <Svg><Art /></Svg>
          {running && <span className="mt-[2px] size-[6px] rounded-full bg-black" />}
        </span>
      ))}
      <span className="mt-1 mr-[10px] ml-[12px] h-[54px] w-[2px] bg-[#3d3b3c]" />
      {dockWindows.map((Art, i) => (
        <span key={i} className="w-14 shrink-0">
          <Svg><Art /></Svg>
        </span>
      ))}
    </div>
  );
}

export default function App() {
  return (
    <div className="flex h-[1600px] w-[2560px] flex-col overflow-hidden bg-[#1b1b1b]">
      <Defs />
      <MenuBar />
      <div className="flex flex-1 flex-col bg-[#141418] pt-[2px]">
        <div className="flex h-[1480px] flex-col overflow-hidden rounded-[10px]">
          <TabStrip />
          <Toolbar />
          <BookmarksBar />
          <FeedbackForm />
        </div>
        <div className="flex h-[74px] justify-center bg-linear-to-b from-[#111111] to-[#262626]">
          <Dock />
        </div>
      </div>
    </div>
  );
}
